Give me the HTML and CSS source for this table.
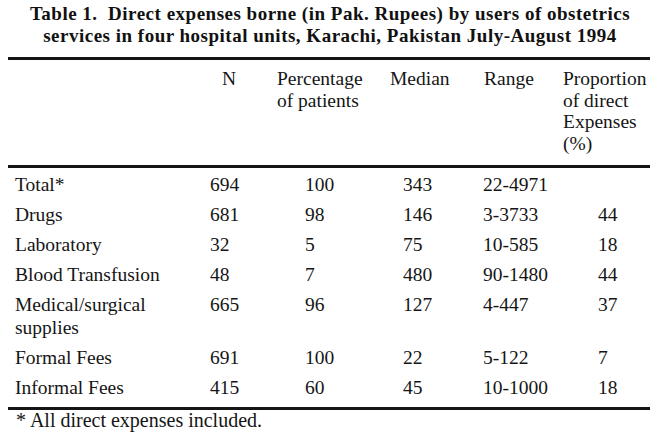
FILE: index.html
```html
<!DOCTYPE html>
<html lang="en">
<head>
<meta charset="utf-8">
<title>Table 1</title>
<link rel="stylesheet" href="styles.css">
</head>
<body>
<div class="page">
  <h1 class="title">Table 1.&nbsp; Direct expenses borne (in Pak. Rupees) by users of obstetrics<br>services in four hospital units, Karachi, Pakistan July-August 1994</h1>
  <div class="rule rule-top"></div>
  <div class="head">
    <div></div>
    <div>N</div>
    <div>Percentage<br>of patients</div>
    <div>Median</div>
    <div>Range</div>
    <div>Proportion<br>of direct<br>Expenses<br>(%)</div>
  </div>
  <div class="rule rule-mid"></div>
  <div class="body">
    <div class="row"><div>Total*</div><div>694</div><div>100</div><div>343</div><div>22-4971</div><div></div></div>
    <div class="row"><div>Drugs</div><div>681</div><div>98</div><div>146</div><div>3-3733</div><div>44</div></div>
    <div class="row"><div>Laboratory</div><div>32</div><div>5</div><div>75</div><div>10-585</div><div>18</div></div>
    <div class="row"><div>Blood Transfusion</div><div>48</div><div>7</div><div>480</div><div>90-1480</div><div>44</div></div>
    <div class="row"><div>Medical/surgical<br>supplies</div><div>665</div><div>96</div><div>127</div><div>4-447</div><div>37</div></div>
    <div class="row"><div>Formal Fees</div><div>691</div><div>100</div><div>22</div><div>5-122</div><div>7</div></div>
    <div class="row"><div>Informal Fees</div><div>415</div><div>60</div><div>45</div><div>10-1000</div><div>18</div></div>
  </div>
  <div class="rule rule-bottom"></div>
  <p class="note">* All direct expenses included.</p>
</div>
</body>
</html>
```

FILE: styles.css
```css
html, body {
  margin: 0;
  padding: 0;
  background: #ffffff;
}
body {
  width: 650px;
  height: 436px;
  overflow: hidden;
  font-family: "Liberation Serif", "Times New Roman", serif;
  color: #151515;
}
.page {
  padding-top: 3px;
}
.title {
  margin: 0 0 0 10px;
  font-size: 19px;
  letter-spacing: 0.5px;
  font-weight: bold;
  line-height: 22px;
  text-align: center;
  color: #111;
}
.rule {
  margin-left: 8px;
  border-top: 3px solid #151515;
}
.rule-top {
  margin-top: 10px;
}
.head {
  display: grid;
  grid-template-columns: 207px 55px 113px 94px 79px 1fr;
  padding: 8px 0 10px 15px;
  font-size: 19.5px;
  line-height: 21.7px;
}
.body {
  padding: 1px 0 5px 15px;
  font-size: 19.5px;
  line-height: 23px;
}
.row {
  display: grid;
  grid-template-columns: 195px 95px 98px 80px 115px 1fr;
  padding: 4px 0 3px;
}
.note {
  margin: 0 0 0 16px;
  font-size: 20px;
  line-height: 20px;
}
```
